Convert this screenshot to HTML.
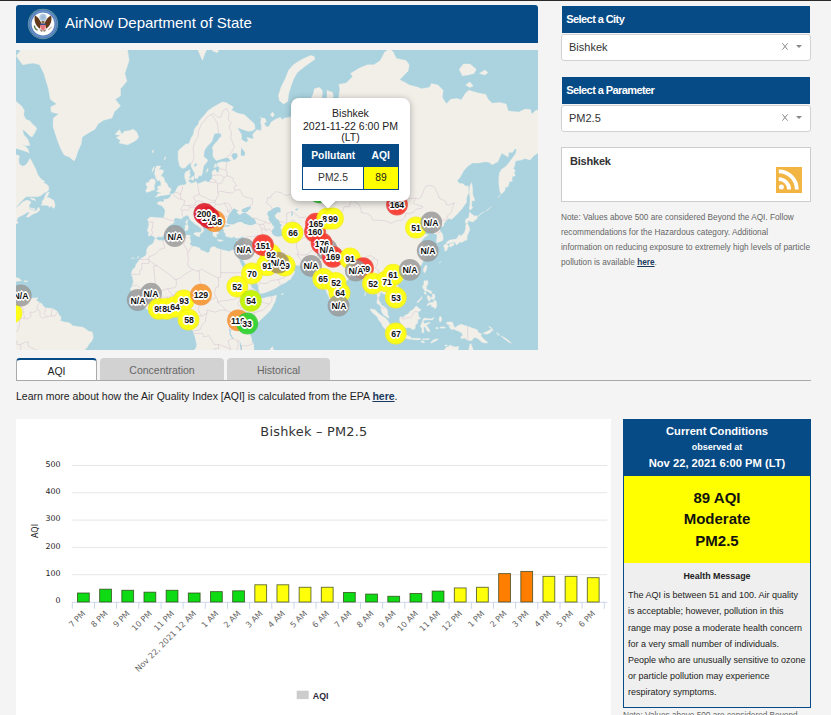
<!DOCTYPE html>
<html lang="en">
<head>
<meta charset="utf-8">
<title>AirNow Department of State</title>
<style>
*{box-sizing:border-box;margin:0;padding:0}
html,body{width:831px;height:715px;overflow:hidden;background:#f4f4f4;font-family:"Liberation Sans",Arial,sans-serif;color:#222}
body{position:relative}
.abs{position:absolute}
#topline{left:0;top:0;width:831px;height:1px;background:#2a2a2a}
#hdr{left:16px;top:5px;width:522px;height:38px;background:#064a86;border-radius:3px 3px 0 0;color:#fff}
#hdr .t{position:absolute;left:49px;top:8px;font-size:15px;line-height:19px;white-space:nowrap}
#map{left:16px;top:50px;width:522px;height:300px;background:#aad3df;overflow:hidden}
.ph{background:#064a86;color:#fff;font-weight:bold;font-size:11px;line-height:27px;padding-left:4.5px;height:27px;left:561.8px;width:248.3px;letter-spacing:-0.58px}
.sel{left:561px;width:250px;height:27px;background:#fff;border:1px solid #d2d2d2;border-radius:3px;font-size:11px;line-height:25px;padding-left:7px;color:#333}
.sel .x{position:absolute;left:219.8px;top:8.2px;width:6px;height:7px}
.sel .c{position:absolute;right:8.3px;top:10px;width:0;height:0;border-left:3.4px solid transparent;border-right:3.4px solid transparent;border-top:3.4px solid #888}
#city{left:561px;top:147px;width:250px;height:54.6px;background:#fff;border:1px solid #ccc}
#city b{position:absolute;left:8px;top:6.6px;font-size:11px;color:#333;letter-spacing:-0.2px}
#rss{position:absolute;left:214.2px;top:19.2px;width:26px;height:26px;background:#f2b442}
#note{left:561px;top:209.7px;width:265px;font-size:8.25px;line-height:15px;color:#666}
#note a,#learn a{color:#1a3a5f;font-weight:bold;text-decoration:underline}
.tab{top:358px;height:23px;background:#d2d2d2;border-radius:4px 4px 0 0;font-size:10.5px;line-height:25px;text-align:center;color:#666}
#tab1{left:16px;width:81px;background:#fff;border:1px solid #aaa;border-top:2px solid #064a86;border-bottom:none;color:#222;line-height:22px}
#tab2{left:100px;width:124px}
#tab3{left:227px;width:103px}
#tabline{left:16px;top:380px;width:795px;height:1px;background:#a9a9a9}
#learn{left:16px;top:389px;font-size:10.5px;line-height:14px;color:#222;white-space:nowrap}
#chart{left:16px;top:419px;width:595px;height:300px;background:#fff}
#cc{left:623px;top:419px;width:188px;height:288.9px;border:1px solid #064a86;background:#efefef}
#cc .h{background:#064a86;color:#fff;text-align:center;font-weight:bold;height:55.7px;font-size:11.2px;line-height:16px;padding-top:3.3px}
#cc .h small{font-size:9px;display:block;line-height:17.4px}
#cc .h span{display:block;line-height:13px}
#cc .y{background:#ffff00;height:87.2px;text-align:center;font-weight:bold;font-size:15px;line-height:21.25px;padding-top:11.4px;color:#111}
#cc .hm{font-weight:bold;font-size:8.9px;text-align:center;line-height:14px;margin-top:6px;color:#222}
#cc .tx{font-size:9px;line-height:16.14px;padding:4.4px 0 0 4px;color:#222;white-space:nowrap}
#note2{left:623px;top:710.4px;font-size:8.25px;line-height:12px;color:#666;white-space:nowrap}
#labels i{position:absolute;width:30px;text-align:center;font:bold 9.8px/13px "Liberation Sans",Arial,sans-serif;color:#111;font-style:normal;letter-spacing:-0.1px;transform:scaleX(.89);text-shadow:1px 0 0 #fff,-1px 0 0 #fff,0 1px 0 #fff,0 -1px 0 #fff,1px 1px 0 #fff,-1px -1px 0 #fff,1px -1px 0 #fff,-1px 1px 0 #fff,1.7px 0 0 #fff,-1.7px 0 0 #fff,0 1.6px 0 #fff,0 -1.6px 0 #fff,0 0 2px #fff,0 0 3px #fff}
#pop{position:absolute;left:275px;top:48px;width:119px;height:103px;background:#fff;border-radius:8px;box-shadow:0 1.5px 7px rgba(0,0,0,.3)}
#pop .tipc{position:absolute;left:24px;top:103px;width:26px;height:13px;overflow:hidden}
#pop .tip{position:absolute;left:7px;top:-7px;width:12px;height:12px;background:#fff;transform:rotate(45deg);box-shadow:0 1px 5px rgba(0,0,0,.3)}
#pop .pt span{display:block}
#pop .pt{position:absolute;left:0;top:10.2px;width:119px;text-align:center;font-size:10.5px;line-height:11.8px;color:#222}
#pop table{position:absolute;left:11px;top:46px;width:97px;border-collapse:collapse;border:1px solid #064a86;font-size:10.3px}
#pop th{background:#064a86;color:#fff;font-weight:bold;height:22px;padding:0;text-align:center}
#pop td{height:23px;text-align:center;padding:0;color:#333;background:#fff}
#pop td.v{background:#ffff00;border-left:1px solid #064a86;width:35px;color:#222}
</style>
</head>
<body>
<div id="topline" class="abs"></div>
<div id="hdr" class="abs"><svg class="abs" style="left:11px;top:3px" width="32" height="32" viewBox="-16 -16 32 32">
<circle r="15.2" fill="#6f9f9c"/><circle r="14.5" fill="#3f6fb3"/><circle r="13" fill="none" stroke="#6f93c9" stroke-width="1.4"/><circle r="11.7" fill="#9ab6cc"/><circle r="11.2" fill="#fcfcfd"/>
<circle cx="0" cy="-6.6" r="3.6" fill="#b4cbe0"/><circle cx="0" cy="-6.6" r="2.1" fill="#9dbcd9"/>
<path d="M-1.8,-1.2 C-3.2,-3.4 -4.6,-7.2 -8,-8.2 C-9,-5.2 -8.4,-1.4 -6.6,1.2 C-5.6,2.8 -4.4,4 -3.2,4.8 L-2.6,2.2 L-1.4,0.6 Z" fill="#63391a"/>
<path d="M1.8,-1.2 C3.2,-3.4 4.6,-7.2 8,-8.2 C9,-5.2 8.4,-1.4 6.6,1.2 C5.6,2.8 4.4,4 3.2,4.8 L2.6,2.2 L1.4,0.6 Z" fill="#63391a"/>
<path d="M-1.5,-3 L1.5,-3 L1.5,-0.4 L-1.5,-0.4Z" fill="#8a6a48"/>
<path d="M-2.7,-0.4 L2.7,-0.4 L2.7,1.1 L-2.7,1.1Z" fill="#2f4f8f"/>
<path d="M-2.7,1.1 L2.7,1.1 L2.6,4 C2.1,5.6 0.8,6.3 0,6.7 C-0.8,6.3 -2.1,5.6 -2.6,4Z" fill="#e7787e"/>
<path d="M-9.2,1.4 C-9.3,3.8 -8,5.8 -5.6,6.8 L-5,5.8 C-6.8,4.8 -7.9,3.2 -7.9,1.4Z" fill="#5c7b48"/>
<path d="M5,5.4 L8.6,2.4 L9,3 L5.6,6.2Z" fill="#b59c80"/>
<path d="M-3.6,5.6 L-1.6,8 L0,7 L1.6,8 L3.6,5.6 L2.2,5.4 L0,6.8 L-2.2,5.4Z" fill="#9a8a78"/>
</svg><div class="t">AirNow Department of State</div></div>
<div id="map" class="abs"><!--MAP-START--><svg class="abs" style="left:0;top:0" width="522" height="300" viewBox="0 0 522 300"><path d="M139.5,188.5 137.8,186.4 135.6,185.3 132.4,185.9 132.7,182.1 131.2,181.0 132.4,177.1 132.9,174.3 132.4,171.8 131.6,169.2 134.4,167.1 139.0,167.4 143.3,167.7 147.6,168.0 148.6,164.4 149.1,161.4 148.8,159.6 146.7,156.8 145.4,155.5 142.0,154.6 141.2,152.7 143.9,151.4 148.0,152.0 148.0,148.8 148.8,149.4 151.6,149.1 154.6,146.8 154.8,144.4 156.7,143.8 158.6,142.7 159.9,140.7 161.4,137.2 163.1,135.8 166.3,135.0 168.7,135.0 169.7,134.0 170.6,133.6 169.7,130.3 168.7,127.7 168.7,123.9 169.7,121.9 171.8,121.1 174.0,119.6 173.6,124.3 174.6,124.6 173.1,126.9 172.1,129.2 172.5,130.7 172.7,132.1 174.6,132.5 174.6,133.6 177.2,132.9 179.9,131.4 181.6,134.0 185.5,132.5 189.7,130.7 191.2,132.1 193.6,132.1 194.0,130.3 196.1,128.8 196.3,126.2 196.1,122.3 197.6,120.0 199.5,119.6 200.8,122.3 202.7,122.3 203.4,117.1 201.5,115.9 201.2,113.4 204.0,112.2 206.8,111.8 211.0,112.2 215.7,110.5 213.2,109.2 211.9,107.5 208.9,107.9 204.7,109.2 200.4,110.5 198.3,108.4 196.8,105.8 197.2,101.3 196.3,97.6 198.3,94.3 201.5,90.9 203.8,87.5 205.5,86.4 205.1,83.9 202.9,82.9 198.7,83.4 197.2,87.0 196.1,90.9 194.6,92.9 191.7,95.7 189.5,98.5 188.2,101.3 187.8,105.8 188.0,107.1 191.0,109.2 191.7,110.9 190.0,113.0 187.6,115.9 187.0,119.2 186.3,123.5 185.3,125.8 182.7,125.8 181.6,128.4 179.1,128.4 178.5,125.8 178.9,123.5 177.0,120.0 175.3,116.7 174.8,113.9 174.0,111.4 173.6,113.4 171.8,114.7 169.5,117.5 166.3,118.4 163.5,115.9 163.3,114.3 162.3,110.1 162.1,105.8 162.1,101.3 164.6,98.5 167.2,96.2 170.1,93.8 172.3,94.3 173.6,91.9 175.3,87.5 177.4,84.4 178.2,79.7 180.2,76.5 182.1,74.8 183.3,70.9 185.9,68.0 188.5,65.1 191.7,60.9 195.1,58.4 198.3,56.5 201.9,54.6 206.4,52.0 210.0,52.6 213.2,54.6 217.4,57.1 215.3,60.2 217.4,60.9 221.7,63.3 228.1,64.5 233.4,69.2 238.3,73.7 239.2,78.6 236.6,80.8 232.3,81.3 225.9,79.2 221.7,77.6 220.6,75.9 222.8,80.2 225.5,84.4 225.5,89.4 227.0,90.4 230.2,92.4 232.3,90.4 230.8,87.5 233.4,88.0 237.7,89.0 236.6,84.4 240.9,79.7 245.1,80.8 245.5,76.5 244.7,72.0 245.5,68.0 243.6,67.4 249.2,68.6 250.4,72.0 247.9,73.2 250.4,77.0 253.0,76.5 255.3,72.0 259.6,69.2 264.3,67.4 266.4,69.8 268.6,68.0 273.4,67.4 277.1,65.7 280.3,64.5 279.6,60.2 281.3,60.2 287.7,63.3 289.9,63.9 294.1,66.9 296.7,69.2 298.4,65.7 294.5,61.5 293.7,55.9 294.1,50.6 297.3,43.8 298.4,38.8 303.7,37.4 306.5,41.0 305.8,49.3 306.5,55.9 305.8,62.1 306.0,68.0 308.0,72.0 303.7,78.1 304.8,80.8 309.0,76.5 310.7,70.9 310.1,65.1 308.6,59.0 309.7,52.6 311.1,45.9 310.9,40.3 316.5,42.4 317.5,46.6 313.3,51.3 318.6,53.3 321.8,52.6 322.9,45.9 323.9,38.8 322.9,34.4 330.3,32.9 336.7,26.6 334.6,23.4 343.1,18.3 351.6,14.8 358.0,14.8 364.4,10.4 368.7,1.9 373.6,-1.1 377.2,1.9 380.4,8.5 390.0,10.4 393.2,14.8 392.1,20.9 383.6,29.8 390.0,32.9 393.2,35.1 402.7,37.4 404.9,38.8 413.4,37.4 415.5,33.6 421.9,35.1 427.2,40.3 426.2,47.3 430.4,53.9 434.7,49.3 441.1,48.6 445.3,50.0 449.6,43.1 452.8,40.3 462.4,43.1 469.8,44.5 472.0,49.3 476.2,53.3 483.7,52.6 490.1,53.9 492.2,60.9 496.5,61.5 502.9,62.1 509.2,59.0 514.6,59.6 515.6,64.5 513.5,66.3 519.9,60.2 526.3,60.2 532.7,65.1 536.9,65.7 536.9,87.0 531.6,89.0 529.5,88.5 531.6,91.9 533.7,99.0 528.4,99.0 523.1,102.2 517.8,105.8 514.1,110.1 509.2,108.4 505.0,110.1 501.8,110.5 499.4,110.9 498.6,115.9 497.3,118.8 499.2,120.0 498.2,123.1 499.2,125.8 496.5,126.6 495.8,129.9 496.7,130.7 493.3,132.1 492.2,136.5 489.4,137.5 488.6,141.0 485.8,143.4 485.2,144.4 483.7,140.7 482.8,133.6 482.8,128.1 483.7,122.3 485.8,119.2 490.1,116.3 493.3,112.2 496.5,107.9 499.7,103.5 500.7,99.0 498.6,99.0 496.5,102.6 492.8,102.2 492.2,107.1 485.8,103.1 481.5,112.2 480.5,112.2 476.2,114.7 473.0,112.2 468.8,111.8 462.4,113.0 456.4,113.0 451.7,116.3 447.5,121.1 444.3,126.9 441.1,130.7 443.6,133.6 446.4,133.6 449.6,136.1 452.4,136.1 452.2,140.0 452.8,142.4 450.7,147.5 450.5,152.4 447.5,156.5 445.8,159.0 442.1,163.2 440.0,165.3 435.8,169.2 432.6,168.6 430.0,170.9 427.9,173.5 427.7,175.5 424.0,177.7 423.0,179.1 424.7,181.3 426.8,185.1 427.2,188.5 426.6,190.6 423.4,191.9 420.6,192.7 420.6,189.8 421.1,186.4 420.8,184.3 418.3,183.7 417.6,181.8 418.3,179.1 416.4,177.7 412.3,179.1 409.8,181.0 411.3,176.3 409.6,175.2 405.9,178.2 402.7,179.9 402.1,181.5 404.7,184.3 405.9,185.3 408.7,183.7 412.5,185.1 409.1,186.9 407.6,188.5 405.5,191.1 407.6,193.7 408.9,196.8 410.8,199.3 411.0,201.5 408.7,203.0 411.3,204.3 410.4,207.4 408.5,209.1 406.6,212.2 405.3,215.1 403.2,216.9 400.6,219.3 397.4,221.1 394.6,222.1 392.1,222.7 389.3,223.9 386.8,224.6 386.1,226.6 385.3,224.1 382.5,223.4 379.3,225.0 378.7,226.6 376.8,228.9 377.2,231.1 379.3,234.0 381.9,236.0 383.6,239.6 384.2,242.9 384.0,245.5 381.4,247.7 379.3,248.5 378.2,250.0 375.5,252.2 374.6,249.8 374.0,248.5 371.9,248.1 370.8,246.6 369.3,244.6 366.5,243.5 366.3,242.0 364.4,242.2 364.2,245.1 362.9,247.7 362.9,250.7 364.4,252.6 365.5,255.4 367.6,256.3 369.3,257.6 371.4,260.1 371.6,262.3 371.9,264.8 373.3,267.8 371.9,268.0 369.7,266.3 367.4,264.8 365.9,262.3 365.0,259.1 365.0,256.9 363.3,254.8 361.2,253.7 360.8,251.6 361.6,248.3 361.2,245.1 360.6,241.8 359.7,238.5 359.3,235.2 357.6,234.0 356.3,235.2 354.4,236.7 352.3,236.3 352.7,232.9 352.0,230.0 350.6,227.8 349.1,226.2 347.4,223.9 346.9,222.1 344.4,221.6 342.0,223.2 339.3,223.4 336.7,223.9 336.3,226.2 334.6,227.5 332.4,228.9 330.3,231.1 328.8,232.5 326.7,234.7 324.4,236.3 322.4,237.4 322.0,240.7 322.4,242.7 321.6,245.5 321.4,248.7 319.7,250.9 318.0,252.0 316.5,253.5 314.3,251.6 313.7,249.4 312.6,246.1 310.9,243.1 309.7,239.6 308.6,237.4 307.5,234.0 306.5,229.6 306.3,226.2 306.0,223.9 305.2,225.0 302.6,225.7 299.4,223.4 298.4,222.1 300.9,220.7 298.4,220.4 296.7,218.8 295.0,218.1 293.9,216.0 293.0,214.8 288.8,215.3 283.5,215.5 279.2,215.1 274.9,214.4 273.2,211.5 271.5,210.8 268.1,212.0 264.3,211.0 261.1,208.9 259.6,206.2 257.9,203.3 255.6,202.8 253.6,203.8 254.1,205.5 254.9,207.9 256.8,210.3 258.3,212.2 259.0,214.6 260.0,216.7 260.5,213.2 261.3,215.8 261.3,217.6 263.4,217.6 267.3,217.2 269.2,215.1 270.9,213.2 271.5,212.7 271.5,216.0 272.8,218.1 276.2,219.0 278.8,221.6 277.7,224.1 276.0,226.4 274.5,229.6 272.8,230.0 269.6,232.7 266.4,234.0 262.6,236.3 259.0,238.5 255.8,240.0 251.5,241.8 247.2,243.3 244.1,243.5 243.4,241.8 242.6,238.7 242.4,236.3 241.3,233.4 239.2,230.7 237.2,227.3 234.9,224.1 233.4,220.4 230.8,216.9 229.1,213.4 226.6,209.1 225.5,208.6 225.9,205.0 224.5,208.6 224.2,209.4 222.8,207.4 220.8,204.0 220.2,200.8 223.4,201.0 224.7,200.0 225.5,198.3 225.9,196.3 227.2,193.7 227.9,190.6 228.1,188.0 228.5,186.4 225.9,186.7 223.8,187.7 220.6,188.2 217.4,186.4 216.4,187.7 213.2,187.2 211.0,186.4 209.5,185.9 209.5,183.2 207.6,182.1 208.5,179.9 207.0,179.1 207.2,177.7 210.0,176.6 213.2,176.3 213.2,174.9 212.1,174.9 210.0,175.2 207.8,176.3 206.8,175.5 204.7,175.2 202.5,175.7 203.2,177.1 201.5,177.7 200.0,176.3 199.5,178.2 200.4,179.9 200.8,181.5 202.5,182.6 202.5,184.0 200.8,183.4 200.4,184.8 200.8,187.2 199.3,187.2 198.7,186.1 197.6,186.4 196.8,184.3 197.2,182.6 196.1,181.8 195.5,180.5 194.4,178.8 193.1,176.3 192.7,173.5 192.5,172.0 190.8,170.6 188.7,169.2 186.1,167.4 183.8,165.3 182.5,162.6 180.8,163.5 180.4,161.4 177.8,162.0 177.6,164.7 180.2,167.4 181.6,170.6 183.8,172.3 185.5,172.3 185.5,173.8 187.6,174.9 189.7,176.0 190.8,177.4 190.0,178.0 187.6,176.3 186.8,178.2 188.0,180.5 186.5,182.1 185.5,183.4 184.8,183.2 185.1,181.5 185.9,180.5 185.1,177.7 183.3,177.1 182.3,176.0 181.6,175.5 179.1,174.3 177.4,172.6 175.3,170.9 173.8,169.2 173.1,166.8 170.6,165.0 168.4,166.5 167.2,167.1 165.2,168.9 162.5,168.3 159.9,167.7 158.0,168.9 158.0,170.9 158.2,172.3 156.1,174.0 153.3,175.2 151.4,178.2 150.8,179.4 151.8,181.0 150.3,182.4 149.7,184.3 147.6,185.3 146.7,186.7 142.0,186.7 140.1,188.0ZM138.8,189.0 140.1,188.8 142.9,190.6 145.2,190.3 147.1,190.9 149.3,189.3 151.4,188.8 154.2,187.2 157.8,186.4 162.1,186.4 166.3,185.9 170.6,185.3 172.5,185.1 174.8,185.9 173.8,187.5 174.4,189.8 174.8,192.4 173.1,193.7 174.8,195.0 177.0,196.5 179.5,196.5 183.8,198.0 184.4,200.0 188.7,201.5 191.9,203.0 194.0,201.3 194.0,198.8 196.1,196.8 199.3,196.8 200.8,198.3 204.7,199.5 208.9,200.5 213.2,201.5 215.3,200.5 217.4,199.8 220.2,200.8 221.7,201.0 220.8,204.0 221.1,206.2 223.0,209.1 223.8,211.5 225.7,215.8 227.2,218.3 227.4,220.4 230.0,222.7 230.6,225.0 230.8,228.2 231.7,230.7 233.6,231.8 235.3,236.3 235.5,237.4 237.7,238.9 239.8,241.1 242.4,242.9 243.6,244.4 243.4,245.9 245.1,248.3 247.2,248.3 251.5,247.0 255.8,246.6 260.5,245.3 260.0,248.3 259.0,251.6 256.8,255.9 254.7,260.1 251.5,263.3 248.1,266.5 244.1,270.2 240.9,272.9 238.7,275.1 237.0,277.2 236.0,279.3 234.5,282.5 234.0,284.7 235.5,287.9 236.0,292.2 237.5,293.3 237.9,297.6 237.7,302.0 238.1,305.3 234.5,309.8 177.0,309.8 176.5,305.3 177.6,300.9 180.2,297.6 180.8,294.4 179.7,290.0 178.7,285.7 177.6,283.6 177.4,281.5 176.5,280.4 174.8,278.7 172.1,276.1 170.6,272.9 171.2,270.2 172.1,267.6 172.3,264.4 171.6,262.5 170.4,261.2 169.1,261.2 166.3,261.4 164.2,261.6 162.9,259.7 161.0,257.4 158.6,257.1 155.7,257.4 153.5,258.0 151.4,258.6 149.3,259.7 147.1,260.6 145.0,259.9 142.9,259.5 138.6,260.4 135.4,261.4 132.2,260.1 128.4,257.4 126.9,256.1 124.8,254.8 123.3,252.6 122.2,250.5 120.3,248.3 119.5,247.2 117.3,245.5 115.8,244.2 115.6,242.0 115.2,240.2 114.1,239.1 115.6,237.4 116.3,235.2 117.3,231.8 116.7,228.4 116.3,226.2 115.2,225.0 115.4,222.7 116.9,219.3 119.5,216.9 119.9,214.6 122.6,211.0 123.9,208.9 126.9,207.4 129.7,205.5 130.7,202.8 130.5,200.0 131.8,197.5 133.3,195.5 135.2,194.7 136.9,193.7 138.0,191.1ZM256.4,296.5 258.5,303.1 258.5,309.8 245.1,309.8 246.2,305.8 249.4,304.7 252.6,302.0 254.1,299.4ZM139.3,147.1 142.5,146.5 143.9,145.8 147.1,145.5 149.3,145.1 152.0,144.8 154.4,143.4 153.3,142.4 154.8,140.7 155.0,138.6 152.5,137.2 151.8,135.4 151.0,133.6 148.8,131.4 148.0,128.1 146.1,126.2 144.6,126.2 145.9,124.3 147.1,122.3 147.6,120.3 143.9,119.6 142.5,120.3 144.8,115.9 140.8,115.9 139.0,119.2 139.0,122.3 138.2,123.5 139.7,126.2 139.5,128.8 141.2,128.1 140.8,130.7 143.9,130.3 145.0,133.6 144.8,136.1 141.8,136.1 141.6,137.9 142.7,139.6 140.3,141.0 142.2,142.1 145.0,142.7 143.9,143.4 141.8,143.8 140.8,145.8ZM138.6,140.0 138.2,136.1 139.5,131.8 138.2,129.2 135.9,128.8 133.7,129.9 133.3,132.1 130.1,132.9 130.3,135.8 131.6,136.8 130.5,139.3 129.5,141.0 131.0,142.4 133.7,141.4 136.5,140.3ZM103.0,92.9 108.8,94.3 111.6,94.8 117.3,91.9 120.5,89.9 122.6,87.0 120.5,81.8 117.3,79.2 113.1,80.8 108.2,81.3 106.0,84.4 103.5,79.7 100.3,82.9 99.2,84.4 104.5,85.4 100.3,87.5 104.5,90.4ZM57.9,110.9 53.4,107.1 48.1,104.9 44.9,99.0 41.7,90.9 39.6,84.4 37.0,76.5 37.4,68.0 42.8,63.9 35.3,62.1 34.7,57.1 40.6,53.9 34.3,49.3 32.5,38.8 27.9,23.4 23.6,14.8 17.2,13.1 6.6,14.8 0.2,5.7 4.4,0.9 -4.1,-6.2 6.6,-20.5 13.0,-32.8 23.6,-53.9 55.6,-70.2 87.5,-81.2 108.8,-53.9 125.8,-46.4 115.2,-26.5 110.9,-4.1 113.1,10.4 108.8,23.4 110.9,31.3 104.5,38.8 104.5,45.9 99.2,49.3 104.5,55.9 98.2,62.1 96.0,68.0 87.5,70.3 82.2,73.7 79.0,79.2 71.5,83.4 66.2,87.0 65.1,94.3 61.9,101.3 59.8,107.9ZM181.2,-9.4 182.3,0.9 186.5,10.4 188.7,3.8 191.4,-2.1 196.1,-9.4 189.7,-26.5 177.0,-26.5ZM196.6,0.9 201.5,2.8 203.6,-3.1 200.4,-7.2 196.1,-5.2ZM262.5,45.5 265.1,37.1 269.3,28.7 272.6,20.3 277.7,14.4 286.1,9.3 294.5,5.4 298.2,6.5 298.8,9.3 292.9,13.5 287.0,17.7 281.1,22.8 277.7,28.7 275.2,35.4 272.6,43.9 271.8,51.4 267.6,54.0 263.4,50.6ZM254.3,65.1 256.8,66.9 258.5,64.5 256.4,62.1ZM276.0,59.0 279.8,60.9 280.3,57.8 277.1,55.9ZM443.2,19.2 446.4,25.8 451.7,25.0 458.1,23.4 460.2,19.2 453.9,14.0 447.5,14.0ZM449.6,35.1 453.9,37.4 457.1,35.9 453.9,32.1ZM463.4,23.4 468.8,25.0 472.0,22.5 468.8,20.0ZM364.4,-4.1 370.8,-3.1 376.1,-9.4 370.8,-18.2 364.4,-14.8ZM453.9,160.2 456.8,157.7 455.4,155.5 456.0,150.7 459.0,150.7 456.6,144.1 456.6,138.9 455.6,132.5 454.3,135.4 453.4,138.9 453.6,144.1 454.1,149.1 453.9,154.0 453.4,158.3ZM449.6,173.5 452.2,172.6 451.7,170.6 456.6,172.0 461.3,168.6 460.7,165.6 458.8,166.2 455.6,164.1 453.4,162.0 453.2,165.3 452.4,168.3 450.5,168.6 449.2,170.6ZM451.5,173.5 452.8,176.3 453.9,179.1 452.8,182.4 451.7,184.5 450.9,187.7 451.3,189.3 449.2,191.1 449.0,189.8 447.0,191.9 445.8,192.2 443.2,192.2 442.8,192.9 441.7,194.2 440.7,195.0 439.2,193.2 439.4,192.2 436.8,192.2 433.6,193.2 430.4,194.0 430.4,192.4 433.6,190.1 435.8,189.8 439.0,189.3 441.1,188.5 442.8,185.1 443.8,184.5 443.6,186.4 446.4,184.8 448.3,182.6 449.4,179.9 449.6,177.7 449.4,176.0 450.2,174.3ZM433.6,196.3 434.7,197.0 437.2,195.5 438.3,194.2 437.2,192.9 434.7,193.7 433.2,195.0ZM428.7,200.8 429.8,201.3 430.6,200.3 431.5,198.8 432.6,196.3 431.5,194.7 430.0,194.0 427.9,195.0 427.7,196.8 428.7,198.3ZM408.7,223.0 410.2,220.4 411.0,216.2 410.2,215.1 409.1,215.8 407.4,219.3 407.6,221.6ZM382.9,229.6 384.6,231.4 386.8,230.0 387.8,228.0 386.8,227.1 384.6,227.5ZM321.4,253.7 321.8,249.8 323.5,251.6 324.6,252.6 325.6,254.8 325.4,256.9 323.9,257.8 322.2,258.0 321.4,255.9ZM408.3,230.7 411.7,230.7 412.1,234.0 410.4,236.3 410.4,238.9 412.3,240.2 415.3,241.1 415.7,243.7 414.0,242.9 412.3,241.8 410.8,240.9 408.7,241.1 408.3,239.6 407.0,238.5 406.6,235.6 407.9,234.9 407.9,232.9ZM411.0,255.9 411.7,253.7 414.5,252.6 417.2,252.2 418.7,249.8 420.4,251.6 420.8,254.8 420.2,257.4 418.7,258.9 418.1,256.9 415.5,256.9 415.5,254.8 413.4,254.8ZM416.2,244.0 418.3,244.0 419.1,246.8 418.1,249.0 417.2,249.4 416.4,247.7 416.6,246.1ZM411.3,248.3 411.3,245.5 413.4,245.9 414.5,247.7 414.0,251.1 412.5,250.9 412.1,249.4ZM407.9,242.0 409.8,242.0 410.2,244.2 409.1,244.6ZM401.0,252.8 402.7,252.0 405.9,248.3 406.1,246.4 404.9,248.1 401.7,251.1ZM383.6,267.6 384.8,266.5 387.8,267.6 388.7,265.5 392.1,264.0 394.2,261.2 396.4,260.1 398.5,258.0 400.0,255.9 401.7,256.9 402.7,258.4 405.3,259.5 403.2,261.2 402.1,262.3 402.3,264.4 402.7,266.5 404.9,268.7 402.3,269.1 401.7,270.8 401.7,272.9 399.5,275.1 399.1,278.3 398.5,279.3 395.5,279.3 395.3,278.0 392.1,277.6 390.0,278.0 387.8,277.2 386.1,276.8 385.7,274.0 384.0,271.9 383.6,269.7ZM354.4,258.9 359.1,259.7 360.8,261.8 364.0,264.4 366.1,266.1 368.7,267.6 371.2,269.7 372.5,271.9 374.0,274.0 375.0,275.7 377.2,277.2 377.0,280.4 376.8,283.2 374.2,283.2 372.5,281.5 369.3,279.3 366.5,276.1 365.3,272.9 362.7,270.2 361.6,267.2 359.1,264.8 356.5,262.7 354.4,260.1ZM375.5,285.3 377.2,283.4 379.3,283.5 382.5,284.7 386.8,285.5 387.8,284.5 391.5,285.5 395.1,287.3 395.3,289.4 390.0,288.5 385.7,287.9 381.4,287.5 378.0,286.6ZM395.5,288.3 397.6,288.1 399.8,288.5 401.7,288.3 404.4,288.5 404.9,289.4 400.6,290.0 396.4,289.6ZM406.6,288.8 410.2,288.8 413.4,288.5 413.0,289.4 408.1,289.8 406.6,289.6ZM404.9,291.1 407.0,290.7 408.7,292.2 406.6,292.9ZM414.5,292.9 416.6,290.5 418.7,289.2 422.5,288.8 420.8,290.5 417.6,292.0 415.5,292.9ZM405.9,282.5 405.9,278.3 404.4,276.6 405.5,273.4 406.6,270.8 407.0,269.3 408.7,268.0 412.3,268.7 415.5,268.7 418.1,267.4 416.6,269.9 413.4,269.9 409.1,269.9 407.4,270.8 407.4,272.7 409.1,273.8 411.3,272.7 414.0,272.5 414.2,272.9 411.3,274.4 410.2,275.1 411.9,277.2 412.3,278.3 413.4,279.3 413.8,282.1 411.3,281.0 410.2,279.3 409.1,276.6 407.6,277.2 407.9,280.4 407.9,282.7ZM423.0,268.7 424.0,266.1 425.5,267.6 425.7,270.2 424.0,272.5 423.4,270.8ZM424.0,277.2 427.2,276.8 430.0,277.8 427.2,278.3 424.0,278.0ZM419.8,277.6 421.9,277.4 422.3,278.5 420.2,278.9ZM430.4,272.5 433.6,271.7 436.8,272.5 437.2,275.1 439.0,277.8 442.1,275.5 445.3,274.2 448.5,275.5 451.7,276.3 456.0,278.0 459.2,278.9 462.0,280.4 462.0,282.3 464.5,283.6 466.2,284.2 464.5,285.3 466.6,287.9 468.8,290.0 472.0,292.6 469.8,293.1 466.6,292.4 464.5,291.1 462.4,289.0 459.2,287.3 457.1,288.5 456.0,290.5 453.9,290.5 451.7,290.3 448.5,288.1 445.3,288.8 444.9,286.4 447.0,285.3 445.3,282.5 441.1,280.6 437.9,279.3 434.7,279.3 434.3,277.8 432.6,276.8 435.8,275.9 433.6,275.5 430.4,273.6ZM467.3,283.0 470.9,281.5 474.1,279.8 475.8,280.0 474.7,282.5 470.9,284.2 467.7,283.6ZM472.6,276.3 475.2,277.6 477.3,280.4 476.7,280.8 474.1,277.8ZM480.7,282.5 483.3,284.7 482.6,285.5 480.9,283.6ZM484.7,285.7 489.0,287.9 493.3,291.1 495.4,293.3 492.2,291.8 487.9,288.5ZM452.8,309.8 452.6,305.3 453.0,298.7 453.9,294.4 454.9,293.7 456.0,296.5 457.7,301.6 459.2,301.6 460.9,303.1 461.3,306.4 462.4,309.8ZM415.5,309.8 416.6,306.0 417.6,303.1 419.8,300.9 421.9,300.9 424.0,302.7 426.2,303.1 427.7,302.7 428.3,299.8 430.0,297.4 432.6,296.5 433.8,295.0 435.8,296.1 439.0,297.0 442.8,296.5 442.1,299.8 440.7,302.0 440.0,303.1 443.2,305.3 447.5,307.6 449.6,309.8ZM428.7,295.2 431.1,295.0 431.3,295.9 429.4,296.1ZM-4.1,309.8 -4.1,245.5 -0.9,244.4 0.2,245.5 -1.3,247.7 -0.5,249.4 0.2,247.2 2.3,246.1 2.3,244.8 4.4,246.1 6.1,248.1 10.8,248.1 14.0,249.0 17.2,247.9 19.3,248.1 19.8,249.8 21.9,251.6 23.6,252.6 25.7,253.7 27.4,256.3 30.0,258.0 33.8,258.2 36.4,258.6 40.0,260.4 41.7,261.8 42.8,264.4 44.9,267.0 44.9,269.7 43.8,270.8 46.0,271.2 48.1,271.9 49.2,272.3 51.3,272.3 54.5,273.6 56.6,275.7 58.7,275.9 61.9,276.8 66.2,277.0 69.4,278.7 72.2,281.0 76.2,281.9 77.1,285.7 77.1,288.1 75.8,291.1 73.7,293.3 72.2,295.5 70.5,298.3 69.4,298.7 68.3,302.0 68.3,309.8ZM19.6,249.4 21.5,249.2 21.7,247.7 19.6,247.9ZM-4.1,227.5 -0.9,227.5 2.3,228.0 5.7,230.5 3.4,230.9 0.2,231.4 -0.9,232.5 -4.1,231.4ZM8.3,230.7 11.7,230.9 11.2,231.8 8.3,231.8ZM-4.1,174.9 -2.0,174.3 2.3,172.9 0.8,170.6 1.9,167.4 4.4,166.2 8.7,164.1 10.8,162.6 14.0,161.7 10.4,167.1 13.0,167.1 16.1,164.4 21.5,162.3 23.6,160.2 24.0,159.6 22.5,157.1 20.4,160.8 17.2,160.8 14.0,159.6 13.4,157.1 13.0,154.6 14.4,154.0 14.7,151.4 10.8,150.1 6.6,152.0 2.3,156.2 -0.3,157.7 3.4,153.3 6.6,150.1 9.8,146.8 15.1,146.5 20.4,146.8 24.7,145.8 27.9,143.1 31.1,141.4 32.8,140.0 32.5,136.1 29.6,133.6 26.8,132.9 28.9,131.4 24.7,128.8 21.5,124.3 19.8,119.2 17.6,115.1 15.1,110.1 13.8,108.4 11.9,112.2 9.8,115.1 6.6,116.3 3.4,114.3 2.7,110.1 3.4,105.8 -0.9,104.4 -4.1,102.2ZM25.1,155.2 26.8,152.4 25.7,152.0 27.9,149.1 29.4,145.1 30.4,143.1 33.2,142.1 32.1,145.1 30.6,147.5 33.2,147.8 35.3,149.1 37.4,150.1 38.5,152.4 39.1,155.5 38.1,158.3 36.4,157.7 36.0,155.8 33.2,157.4 32.5,155.5 28.9,155.2ZM14.0,147.8 18.3,148.8 20.0,150.4 16.1,149.8ZM14.4,157.7 19.3,159.0 18.3,160.2 15.5,159.3ZM-4.1,97.6 2.3,99.0 10.8,101.7 13.2,103.1 11.9,99.0 9.8,96.7 5.5,93.4 9.8,95.7 14.0,95.3 11.9,89.4 7.6,84.4 6.6,79.2 9.8,81.8 14.0,85.9 16.1,87.0 19.3,81.8 20.8,78.6 19.3,76.5 16.1,73.7 14.0,70.9 9.8,69.2 7.6,65.1 8.3,60.2 5.5,55.9 1.2,52.6 -2.0,49.3 -4.1,48.0ZM-4.1,27.4 -4.1,10.4 -19.0,10.4 -19.0,27.4ZM-4.1,-9.4 -4.1,-70.2 -19.0,-70.2 -19.0,9.4 -14.7,6.7 -8.3,-4.1ZM177.8,183.2 179.7,182.6 184.6,182.4 183.6,185.9 183.6,186.7 181.9,186.4 178.0,184.3ZM168.9,180.5 169.3,175.2 171.0,174.3 172.3,176.3 171.8,179.9 170.6,180.5 169.5,180.7ZM169.7,172.0 171.4,169.2 171.6,172.0 171.0,173.8 169.9,173.2ZM201.5,189.6 203.6,189.8 207.4,190.3 204.2,191.4 201.7,190.6ZM220.2,191.1 221.7,190.3 225.1,189.3 223.8,191.1 221.7,192.2ZM156.5,178.8 158.2,178.0 158.6,179.1 157.6,179.6ZM175.3,127.3 178.0,126.2 178.0,128.8 176.5,130.7 175.0,128.8ZM172.3,128.1 174.2,128.1 174.4,129.6 172.7,129.9ZM190.2,122.3 191.4,118.8 192.3,118.8 191.4,121.5ZM198.0,117.5 200.8,116.7 200.4,115.5 198.3,115.9ZM198.5,115.1 200.4,115.1 200.0,113.9 198.9,114.3ZM265.1,244.0 267.5,243.5 267.3,244.2 265.4,244.4ZM136.5,119.2 138.2,116.3 138.0,118.8 136.1,122.3ZM148.0,110.1 149.3,106.6 149.5,108.8ZM135.9,101.3 137.6,99.9 137.1,103.1ZM115.4,208.6 117.1,207.4 116.5,208.4ZM117.7,208.4 118.6,208.4 118.4,209.1ZM121.2,208.4 122.0,206.9 122.6,205.7 122.0,208.2ZM420.2,195.5 421.7,195.0 421.1,195.8ZM423.4,213.2 424.7,211.5 423.8,212.2ZM461.3,166.8 463.4,165.0 468.3,161.7 465.6,163.2 462.4,166.2ZM469.8,161.1 472.0,159.6 475.6,156.5 470.9,160.2ZM482.0,147.5 484.1,144.8 482.8,146.8ZM348.6,246.1 349.5,241.8 349.3,245.5ZM375.5,274.2 377.6,274.4 378.7,277.2 376.8,276.3ZM380.6,276.3 382.1,276.8 381.4,277.6ZM415.5,249.4 416.6,249.4 416.2,246.8 415.3,247.2Z" fill="#f2efe9" stroke="#f2efe9" stroke-width="0.4" stroke-linejoin="round"/><path d="M211.0,173.5 211.0,169.2 212.3,166.8 212.5,164.7 214.7,162.6 216.4,159.6 218.5,158.3 220.6,159.9 222.8,159.9 220.6,162.0 222.8,164.4 223.8,165.0 226.4,163.2 229.1,162.3 230.2,163.2 231.3,164.1 234.5,166.2 236.0,167.7 238.7,169.2 240.0,172.0 239.8,173.5 236.6,174.9 233.4,175.2 230.2,174.3 228.1,173.8 225.9,172.0 222.8,172.0 219.6,173.2 217.4,174.6 214.2,174.3 213.2,174.3ZM225.9,161.7 225.9,159.3 229.1,158.0 231.3,157.1 234.9,156.5 234.5,158.7 232.3,160.2 231.3,162.0 229.4,162.0 227.0,162.3ZM208.9,176.3 210.0,174.9 213.2,174.9 214.2,175.7 212.1,176.6ZM252.6,169.5 252.6,166.2 251.1,164.4 251.9,161.7 254.7,160.2 257.9,158.0 261.1,157.1 264.3,157.7 264.7,162.3 261.1,162.6 260.0,164.7 258.5,165.0 260.0,168.6 263.2,170.6 263.9,173.5 266.0,174.9 264.3,177.7 265.4,179.6 266.2,184.5 266.4,186.1 262.2,186.7 259.0,185.9 256.8,184.5 255.6,182.1 256.4,179.6 258.5,176.9 256.8,175.7 255.8,173.5 254.3,172.0ZM279.2,159.3 282.4,158.0 281.3,160.2 279.8,160.5ZM275.4,161.7 276.6,161.4 276.9,164.7 275.8,166.8 275.4,164.7ZM372.3,142.1 374.0,142.7 377.2,140.0 381.4,136.1 384.6,130.7 385.5,126.9 384.0,127.3 382.1,132.9 378.9,136.5 375.0,140.0ZM308.0,162.6 309.0,159.6 312.2,158.0 316.5,158.3 319.7,158.7 318.6,159.6 314.3,159.6 311.1,160.8 309.7,163.2ZM217.0,110.1 219.6,109.2 221.7,106.6 221.1,103.5 217.4,103.1 215.3,105.8 217.0,108.4ZM224.9,105.8 228.7,105.8 229.1,102.2 227.0,99.9 225.5,97.6 224.9,101.3ZM218.9,272.9 219.6,270.4 222.8,269.9 224.9,271.2 223.8,274.0 222.8,276.1 219.6,276.3ZM213.6,278.0 214.7,280.4 214.7,283.6 217.0,287.9 217.6,289.4 216.4,288.8 213.8,284.7 213.4,280.4ZM223.8,291.3 225.1,294.4 225.7,297.6 226.4,301.6 225.3,300.9 224.2,297.6 223.8,294.4ZM177.8,116.3 179.7,113.0 181.2,114.7 179.1,116.7ZM-1.7,251.1 -0.3,251.1 0.2,248.7 -1.1,247.7 -2.2,249.4Z" fill="#aad3df"/><path d="M175.0,114.3 177.4,110.1 178.0,105.8 177.4,102.6 177.2,96.7 179.1,91.9 181.9,87.0 182.5,81.3 185.5,73.7 188.7,70.9 190.2,68.0 194.0,65.1 195.3,64.8M202.9,82.9 201.9,77.6 201.5,73.7 198.3,68.0 195.3,64.8M195.3,64.8 197.2,63.3 201.5,66.9 204.7,67.4 206.8,60.9 210.8,58.4 213.2,63.9 213.0,64.8M213.0,64.8 212.1,69.8 215.3,72.6 213.2,77.0 215.5,83.4 214.7,88.0 216.4,91.9 218.5,97.1 214.2,104.4 210.6,107.9M211.0,112.2 210.0,118.4 210.4,120.7 211.5,125.8 208.1,127.3 206.8,130.3 205.7,132.9 201.5,134.0 201.7,142.4 202.5,144.8 199.5,150.4M203.2,118.8 206.8,119.2 209.8,120.3M196.2,125.8 200.4,125.0 204.7,125.0 208.1,127.3M196.8,129.2 199.8,130.3 200.0,132.1 201.5,134.0M193.6,132.1 200.0,132.3M181.6,134.0 182.1,137.2 182.7,140.7 183.3,144.1 182.9,144.4M182.9,144.4 179.1,146.1 177.4,146.8 178.0,149.1 180.8,151.4M182.9,144.4 186.5,146.5 189.7,147.5 191.7,149.1 194.0,150.1 199.5,150.4M168.9,150.7 167.6,155.2M156.7,143.8 160.3,147.5 163.8,149.1 165.0,149.1 168.9,150.7M166.7,136.1 166.3,140.0 164.2,144.1 164.4,145.1M158.6,142.7 161.0,142.7 163.8,143.4 164.4,145.1 165.0,149.1M167.6,155.2 164.4,159.6 166.3,160.5 166.1,162.9 166.3,165.6 167.4,166.8M167.6,155.2 171.8,155.5 173.8,157.4M166.3,160.5 169.5,159.6 170.6,160.8 172.9,159.6 173.8,157.4M171.8,155.5 177.0,155.2 179.1,155.2 179.1,153.0 180.8,151.4M173.8,157.4 177.4,157.1 180.6,158.7M180.8,151.4 183.3,150.7 187.4,152.0 187.4,154.0 185.7,157.4M180.6,158.7 185.7,157.4M180.6,158.7 180.4,161.4M132.4,172.3 133.9,172.0 137.3,172.3 136.7,174.9 136.5,178.5 135.4,178.8 136.5,182.6 135.6,185.3M147.6,168.0 152.9,169.7 158.2,170.9M187.4,154.0 191.4,154.6 195.1,152.4 198.7,152.7M198.7,152.7 200.2,154.0 196.6,159.0 194.6,159.9M194.6,159.9 191.4,160.5 186.3,158.7 185.7,157.4M180.4,161.7 184.0,161.7 186.3,158.7M191.4,160.5 191.9,163.5 185.5,162.6 185.1,163.8 188.7,169.2M191.9,163.5 192.9,166.2 192.3,168.3 190.8,170.6M194.6,159.9 197.0,162.6 199.8,165.6M199.8,165.6 199.1,169.2 200.2,172.0 200.4,174.0M192.7,172.3 195.1,171.5 197.2,171.2 200.2,172.0M195.1,171.5 195.1,174.9 194.4,178.5M195.1,174.9 200.2,174.0 200.4,174.0M200.2,154.0 204.4,154.9 208.1,153.0 211.5,158.3 211.5,161.7 214.7,162.6M208.1,153.0 211.0,153.0 213.6,154.3 215.5,159.0 211.5,161.7M199.8,165.6 204.7,167.1 208.9,165.9 212.3,167.1M200.4,174.0 203.6,173.8 207.4,172.9 208.1,174.0 206.8,175.5M207.4,172.9 211.0,172.0M201.7,142.4 204.7,141.0 210.0,142.4 216.4,143.1 219.1,140.3M219.1,140.3 218.1,136.8 221.1,135.4 217.0,130.7 217.4,128.1 211.5,125.8M219.1,140.3 223.8,139.6 227.2,146.1 232.3,147.8 236.8,148.8 236.2,154.0 232.8,156.8M199.5,150.4 198.7,152.7M256.2,159.3 254.7,155.8 251.5,154.0 250.4,152.7 251.5,150.1 251.3,147.8 254.7,147.8 255.1,145.5 259.6,141.7 265.4,142.7 267.5,144.1 270.0,145.5 276.2,144.1 279.2,144.8 282.4,144.8 281.3,140.7 279.6,134.0 282.0,133.6 289.9,132.1 296.7,129.9 302.2,128.8 303.1,132.9 308.0,133.6 315.0,132.1 317.3,136.1 321.8,144.8 329.0,144.1 333.1,148.8 337.3,150.1M337.3,150.1 342.5,148.1 348.4,144.8 353.8,147.5 358.6,148.1 360.8,140.7 369.1,143.1 369.3,145.5 375.0,146.1 379.3,147.5 382.5,149.8 387.2,150.1 392.1,148.8 400.0,148.1M400.0,148.1 402.3,149.1 404.9,147.5 407.0,142.4 408.5,138.6 410.2,136.1 414.5,135.4 418.7,137.2 423.0,146.8 423.0,148.1 429.6,151.1 430.4,154.9 433.6,154.9 438.3,152.7 436.8,157.1 434.9,162.9 431.1,166.2 430.9,169.2 429.6,170.9M338.4,150.1 338.8,152.0 343.1,154.3 345.2,160.2 345.2,162.6 350.6,163.5 354.6,165.3 356.7,170.0 364.4,170.3 368.2,170.6 375.0,173.2 380.4,170.9 385.7,170.3 389.5,167.1 389.7,163.2 393.4,163.8 398.1,161.7 399.8,159.3 406.4,158.0 406.8,156.5 401.5,154.9 397.4,153.6 398.5,150.7 400.0,148.1M337.3,150.1 334.2,152.7 333.5,156.8 328.2,156.5 326.7,161.7 321.8,163.2 323.5,168.6 322.2,171.5M322.2,171.5 319.7,169.7 312.9,169.5 309.0,168.6 308.0,170.6 302.6,170.3 302.4,171.5M302.4,171.5 298.4,174.0 296.2,174.9 293.0,174.3 292.0,170.9 292.2,169.2 289.6,167.1 283.5,167.7 281.3,165.3 276.2,161.4 270.7,163.2 270.7,174.0M270.7,174.0 268.3,172.3 264.3,171.8 263.2,172.6M270.7,174.0 272.8,174.0 276.2,170.0 279.2,171.5 279.4,173.8 283.2,174.6 284.5,177.7 288.4,180.7 293.0,184.8M266.2,185.1 269.4,183.2 273.2,182.6 277.7,184.5 281.8,186.9 282.0,189.6M282.0,189.6 285.6,189.0 288.8,187.7 293.0,184.8M282.0,189.6 280.3,193.7 281.1,200.0 283.0,201.8 281.1,204.3M281.1,204.3 285.2,210.6 286.0,211.8 282.6,215.3M281.1,204.3 287.7,205.2 292.6,204.0 296.7,199.3 299.0,199.0 300.5,195.8 301.1,193.7 302.8,192.9 303.7,188.8 303.9,187.2 308.0,186.1 310.9,185.3M293.0,184.8 296.2,185.9 299.0,185.6 300.9,184.3 303.9,186.7 303.9,183.4 307.5,184.8 310.9,185.3M310.9,185.3 310.9,181.8 308.6,179.1 315.2,174.9 318.4,173.8 322.2,171.5M298.4,174.0 301.6,174.9 304.3,173.8 306.9,175.5 302.6,177.1 299.0,177.1 301.6,178.8 308.6,179.1M299.0,177.1 295.2,179.9 296.2,185.9M296.7,218.8 302.6,217.2 300.5,212.0 299.4,211.0 304.8,208.2 308.8,203.8 310.3,201.3 310.1,196.8 312.0,198.0 309.0,193.7 315.4,189.8 312.2,186.7M317.1,189.8 319.5,192.9 319.7,197.5 319.2,200.8 323.9,203.3M323.9,203.3 326.3,203.0 330.3,206.2 334.6,208.6 339.1,208.9M323.9,203.3 322.0,206.7 326.1,208.9 330.3,210.1 334.2,212.0 339.1,212.5 339.1,208.9M339.1,208.9 340.5,210.3 341.0,211.5 347.4,211.5 347.4,209.1 343.1,208.2 340.5,210.3M347.4,209.1 351.6,206.2 354.8,205.7 358.6,208.2M358.6,208.2 356.3,210.3 354.2,211.8 352.9,215.8 351.6,218.3 350.1,220.4 349.9,222.3 348.6,224.3M339.1,212.5 340.3,213.4 342.7,213.4 342.9,215.1 348.2,215.8 347.8,217.6 345.7,218.1 346.3,220.4 348.0,219.3 348.6,224.3M341.0,223.2 340.8,220.9 340.3,217.6 339.1,216.5 339.9,214.6 339.1,212.5M358.6,208.2 361.4,209.8 361.6,213.9 359.3,218.1 362.1,220.0 362.7,222.5 366.7,223.4M366.7,223.4 364.6,226.6 360.1,228.0 358.9,230.7 361.4,235.6 360.6,238.3 362.7,242.9 363.5,245.5 361.8,249.4M366.7,223.4 368.9,221.8 370.6,223.4 372.9,225.3 374.8,227.3 372.7,228.9 375.5,230.7 378.2,234.3 380.4,237.4 380.6,239.1M364.6,226.6 365.5,228.4 367.0,228.4 366.7,232.9 368.9,231.4 372.7,231.1 374.4,233.2 374.6,235.6 376.3,237.2 376.1,239.8 380.6,239.1M376.1,239.8 370.8,240.0 369.5,241.6 370.6,245.7M380.6,239.1 380.4,244.4 376.8,245.9 377.6,247.7 374.0,248.5M368.9,221.8 372.7,221.4 375.7,219.7 378.5,221.4 378.7,222.7 381.4,223.9M416.4,177.7 419.8,175.2 421.7,172.6 424.5,173.8 424.3,172.0 428.1,169.5 429.6,170.9M421.3,183.7 424.9,181.5M364.6,256.9 366.7,258.6 368.9,257.6M384.8,266.5 386.8,268.9 389.5,268.7 390.4,267.6 394.2,267.8 396.4,265.5 397.4,263.3 398.5,261.6 401.9,261.8M451.7,276.3 451.7,290.3M228.5,188.5 229.6,187.7 232.3,186.4 236.6,186.7 241.7,185.6 246.8,185.3 246.2,182.1 245.1,179.4 246.8,178.5M239.8,173.5 244.1,174.6 244.5,177.4 246.8,178.5M236.6,168.0 240.9,168.6 244.7,170.3 250.2,172.3 252.1,174.0 254.9,172.6M244.1,174.6 247.2,174.0 250.2,172.3M247.2,174.0 248.3,176.0 250.4,180.7M246.8,178.5 250.4,180.7 253.6,178.8 255.6,182.1M246.8,185.3 249.4,189.0 248.3,192.4 249.8,195.8 253.2,199.3 253.6,202.5 254.9,204.0M241.7,185.6 239.2,191.6 234.0,195.2M234.0,195.2 234.9,198.5 237.5,199.0 241.1,201.0 246.6,205.7 250.4,206.0 253.0,203.5M250.4,206.0 253.0,207.4 254.5,207.4M227.9,197.0 229.8,198.0 234.0,195.2M227.2,193.7 228.9,193.7 228.1,195.8 227.9,197.0M234.9,198.5 230.2,200.0 232.3,202.5 231.3,203.8 228.1,205.7 225.9,205.2M224.5,200.5 225.7,205.0M227.2,195.8 227.0,197.3 227.0,200.0 225.9,205.0M242.6,235.4 243.6,232.9 246.2,233.2 250.9,233.6 253.6,231.4 256.0,230.5 262.2,229.6M262.2,229.6 264.5,234.9M262.2,229.6 268.6,227.3 270.0,222.7 269.0,221.1M269.0,221.1 263.4,220.7 261.3,217.6M269.0,221.1 270.7,218.1 271.5,216.0M260.0,216.7 261.3,216.7M204.7,199.5 204.7,222.7M204.7,222.7 230.0,222.7M204.7,222.7 204.7,227.3 202.5,227.3 202.5,228.4 185.5,219.3 183.3,220.4 181.6,221.4 177.0,219.3 172.7,216.9 171.6,212.5 172.5,209.6 171.6,203.3 173.3,201.5 173.3,199.5 175.9,197.5 175.9,195.8M171.6,203.3 170.6,198.8 167.4,194.2 168.9,191.9 169.1,187.5 169.7,186.1M146.7,190.9 147.6,193.7 148.8,198.0 143.7,199.5 139.7,204.0 132.9,206.9 132.9,209.4M132.9,209.4 123.3,209.4M132.9,209.4 132.9,213.4 125.8,213.4 125.8,219.3 123.7,220.4 123.7,224.3 115.2,224.3M132.9,210.3 141.2,215.8 137.6,215.8 139.7,237.4 131.2,237.6 128.6,237.6 126.9,237.2 125.4,238.9M141.2,215.8 154.0,224.8 155.2,226.6 158.2,228.0 158.4,229.6 160.3,229.3M160.3,229.3 163.8,228.4 167.4,225.3 177.0,219.3M160.3,229.3 160.3,235.2 158.9,237.6 153.5,238.5 151.8,238.5M151.8,238.5 147.1,240.2 142.9,242.2 140.1,245.5 139.7,248.5M139.7,248.5 134.4,249.0 133.3,246.1 130.1,244.8 127.1,244.2 125.4,238.9M116.3,236.0 120.5,234.9 123.7,237.4 125.4,238.9M127.1,244.2 122.2,243.7 115.8,244.2M115.6,241.6 119.5,241.1 122.0,242.0 119.5,242.4 115.6,242.7M122.2,243.7 122.2,245.7 120.1,246.1 119.5,247.2M159.1,245.7 159.9,241.8 166.3,242.7 170.6,243.3 174.2,242.0 180.4,241.3M180.4,241.3 184.4,234.3 183.3,227.3 183.3,220.4M151.8,238.5 153.3,241.8 156.1,244.2 159.1,245.7M202.5,228.4 202.5,236.9 200.2,237.2 198.3,242.9 200.2,247.2M200.2,247.2 191.9,251.6 184.4,254.8M184.4,254.8 183.3,249.4 181.6,244.0 180.4,241.3M181.6,244.0 179.5,250.5 175.9,256.7 170.6,260.1 169.7,260.6M159.1,245.7 157.4,251.6 157.2,257.1M154.8,257.6 153.3,247.2M154.0,257.8 151.4,247.0M145.4,259.9 145.4,250.5 145.6,247.2M139.7,248.5 145.4,250.0M145.4,247.2 151.4,247.0 153.3,247.2 156.5,245.3 159.1,245.7M135.4,261.4 133.5,256.9 133.7,254.6 134.4,252.6 134.4,249.0M126.9,256.1 129.5,252.6 131.4,255.0 133.7,254.6M129.5,252.6 128.0,249.4 123.1,251.6M200.2,247.2 201.5,249.4 201.5,252.2 207.8,250.5 211.0,250.9 214.2,249.4 217.4,249.8 221.7,247.7 222.1,244.6 224.0,250.5M229.1,240.0 228.3,243.5 224.0,250.5 221.7,253.7 225.9,259.3 227.9,261.0M229.1,240.0 232.3,239.1 236.6,239.6 241.7,244.0M229.1,240.0 230.0,235.2 233.6,231.8M241.7,244.0 240.4,247.2 243.0,247.2 243.4,246.1M243.0,247.2 242.6,247.4 245.1,251.6 251.5,253.7 253.6,253.7 247.2,260.1 240.9,261.8 238.7,262.5M255.8,246.6 255.8,251.6 253.6,253.7M227.9,261.0 232.3,263.1 235.5,263.3 238.7,262.5M238.7,262.5 238.7,270.8 240.0,274.4M223.8,272.9 231.5,277.2 234.9,280.8M223.8,272.9 224.9,268.7 225.9,266.8 224.7,262.9 223.6,261.8 227.9,261.0M201.5,252.2 204.7,254.8 209.8,260.1M185.9,266.1 191.0,263.3 191.0,260.1 199.3,262.1 204.7,260.1 209.8,260.1M209.8,260.1 217.0,263.3 223.6,261.8M217.0,263.3 217.0,265.9 214.4,273.8 213.6,276.8 213.8,280.4M214.4,273.8 216.4,272.9 218.9,272.9M216.4,272.9 217.0,275.9 216.4,278.3 215.3,280.2 213.8,280.4M213.6,276.8 215.3,275.9 217.0,275.9M177.4,283.4 179.1,283.4 186.8,283.4 187.6,286.8 192.9,285.7 198.3,294.4 202.5,294.4 205.3,295.5 210.0,297.0 214.9,299.6 211.9,290.7 217.0,288.3M177.4,281.5 179.1,280.6 184.0,280.0 185.9,275.1 189.3,271.9 190.0,265.7 191.0,263.3M175.0,279.1 176.7,278.3 179.1,275.9 182.1,275.1 182.3,271.9 181.0,270.4 182.1,268.0 179.7,268.0 179.5,266.1M172.3,265.9 175.5,266.1 179.5,266.1 185.9,266.1M172.3,268.7 175.5,268.7 175.5,266.1M185.9,266.1 183.3,262.3 182.3,258.0 184.4,254.8M225.7,295.7 231.3,295.9 237.5,293.3M217.0,288.3 221.5,290.9 223.8,291.1M221.5,290.9 222.3,294.4 221.1,300.0 215.7,302.7 213.0,305.1M202.5,294.4 202.5,298.7 198.3,298.7 198.3,305.8M225.7,295.7 224.9,299.8 227.9,302.9 226.6,307.6M23.6,252.6 21.5,255.9 20.6,258.2 22.1,259.7M22.1,259.7 17.6,262.3 14.0,262.1 15.1,266.5 10.8,269.1 8.7,268.2M22.1,259.7 24.0,261.2 24.0,265.9 26.2,268.2 31.1,266.8M29.6,258.0 29.4,260.1 27.9,263.3 31.1,266.8M36.4,258.6 35.5,262.3 35.3,265.9M31.1,266.8 35.3,265.9 38.9,266.1 41.5,261.8M8.7,268.2 2.7,268.5 3.6,272.9 2.3,279.8 -4.1,285.7M8.7,268.2 7.6,263.3 7.0,257.6 2.3,255.9 -2.0,255.2 -3.0,251.6 -4.1,251.1M-4.1,291.1 1.0,291.1 1.0,294.4 4.4,294.4 5.1,297.6 4.4,300.3 4.6,303.1M4.4,294.4 9.8,292.0 12.3,291.8 12.1,295.9 19.3,299.8 22.5,300.5 23.2,305.8M-0.9,227.5 -1.3,230.0 -1.5,231.8" fill="none" stroke="#c6afc4" stroke-opacity=".6" stroke-width=".6" stroke-linejoin="round"/></svg><!--MAP-END--><!--MK-START--><svg class="abs" style="left:0;top:0" width="522" height="300" viewBox="0 0 522 300"><defs><radialGradient id="gy"><stop offset="0" stop-color="#ffff10" stop-opacity="0.97"/><stop offset=".8" stop-color="#ffff10" stop-opacity="0.97"/><stop offset="1" stop-color="#f4ee18" stop-opacity="0.85"/></radialGradient><radialGradient id="gr"><stop offset="0" stop-color="#fa3a30" stop-opacity="0.95"/><stop offset=".8" stop-color="#fa3a30" stop-opacity="0.95"/><stop offset="1" stop-color="#e93a30" stop-opacity="0.8"/></radialGradient><radialGradient id="go"><stop offset="0" stop-color="#f79a38" stop-opacity="0.95"/><stop offset=".8" stop-color="#f79a38" stop-opacity="0.95"/><stop offset="1" stop-color="#f08c2c" stop-opacity="0.8"/></radialGradient><radialGradient id="gg"><stop offset="0" stop-color="#2fd42f" stop-opacity="0.95"/><stop offset=".8" stop-color="#2fd42f" stop-opacity="0.95"/><stop offset="1" stop-color="#2cc62c" stop-opacity="0.8"/></radialGradient><radialGradient id="gn"><stop offset="0" stop-color="#9b9b9b" stop-opacity="0.85"/><stop offset=".8" stop-color="#9b9b9b" stop-opacity="0.85"/><stop offset="1" stop-color="#929292" stop-opacity="0.75"/></radialGradient><radialGradient id="gl"><stop offset="0" stop-color="#c4f400" stop-opacity="0.95"/><stop offset=".8" stop-color="#c4f400" stop-opacity="0.95"/><stop offset="1" stop-color="#b6e800" stop-opacity="0.8"/></radialGradient><radialGradient id="gc"><stop offset="0" stop-color="#e01a2a" stop-opacity="0.92"/><stop offset=".8" stop-color="#e01a2a" stop-opacity="0.92"/><stop offset="1" stop-color="#d41828" stop-opacity="0.8"/></radialGradient><radialGradient id="gb"><stop offset="0" stop-color="#a89466" stop-opacity="0.9"/><stop offset=".8" stop-color="#a89466" stop-opacity="0.9"/><stop offset="1" stop-color="#a08c60" stop-opacity="0.75"/></radialGradient></defs><circle cx="-4.5" cy="262.9" r="10.9" fill="url(#gy)"/><circle cx="4.8" cy="245.5" r="10.9" fill="url(#gn)"/><circle cx="121.7" cy="250.0" r="10.9" fill="url(#gn)"/><circle cx="135.0" cy="243.6" r="10.9" fill="url(#gn)"/><circle cx="142.8" cy="258.8" r="10.9" fill="url(#gy)"/><circle cx="150.6" cy="258.8" r="10.9" fill="url(#gy)"/><circle cx="159.4" cy="256.8" r="10.9" fill="url(#gy)"/><circle cx="167.8" cy="250.5" r="10.9" fill="url(#gy)"/><circle cx="172.5" cy="269.6" r="10.9" fill="url(#gy)"/><circle cx="185.0" cy="244.6" r="10.9" fill="url(#go)"/><circle cx="158.7" cy="186.0" r="10.9" fill="url(#gn)"/><circle cx="198.5" cy="171.0" r="10.9" fill="url(#go)"/><circle cx="192.8" cy="167.5" r="10.9" fill="url(#gc)"/><circle cx="188.4" cy="163.8" r="10.9" fill="url(#gc)"/><circle cx="268.7" cy="215.6" r="10.9" fill="url(#gy)"/><circle cx="254.5" cy="204.4" r="10.9" fill="url(#gy)"/><circle cx="251.1" cy="215.2" r="10.9" fill="url(#gy)"/><circle cx="235.9" cy="223.5" r="10.9" fill="url(#gy)"/><circle cx="262.4" cy="212.7" r="10.9" fill="url(#gb)"/><circle cx="228.4" cy="199.0" r="10.9" fill="url(#gn)"/><circle cx="247.0" cy="195.1" r="10.9" fill="url(#gr)"/><circle cx="221.3" cy="236.6" r="10.9" fill="url(#gy)"/><circle cx="234.8" cy="250.8" r="10.9" fill="url(#gl)"/><circle cx="222.0" cy="270.3" r="10.9" fill="url(#go)"/><circle cx="231.3" cy="273.5" r="10.9" fill="url(#gg)"/><circle cx="276.5" cy="182.6" r="10.9" fill="url(#gy)"/><circle cx="303.3" cy="142.4" r="10.9" fill="url(#gg)"/><circle cx="310.8" cy="199.6" r="10.9" fill="url(#gn)"/><circle cx="300.0" cy="173.6" r="10.9" fill="url(#gr)"/><circle cx="299.0" cy="181.5" r="10.9" fill="url(#gr)"/><circle cx="311.3" cy="168.7" r="10.9" fill="url(#gy)"/><circle cx="317.0" cy="168.5" r="10.9" fill="url(#gy)"/><circle cx="305.6" cy="193.3" r="10.9" fill="url(#gr)"/><circle cx="316.9" cy="206.9" r="10.9" fill="url(#gr)"/><circle cx="334.0" cy="208.4" r="10.9" fill="url(#gy)"/><circle cx="295.0" cy="215.9" r="10.9" fill="url(#gn)"/><circle cx="347.0" cy="218.2" r="10.9" fill="url(#gr)"/><circle cx="339.8" cy="220.6" r="10.9" fill="url(#gn)"/><circle cx="307.3" cy="228.8" r="10.9" fill="url(#gy)"/><circle cx="319.6" cy="232.8" r="10.9" fill="url(#gy)"/><circle cx="323.5" cy="242.8" r="10.9" fill="url(#gy)"/><circle cx="322.5" cy="255.6" r="10.9" fill="url(#gn)"/><circle cx="356.9" cy="233.5" r="10.9" fill="url(#gy)"/><circle cx="370.5" cy="231.3" r="10.9" fill="url(#gy)"/><circle cx="377.2" cy="224.7" r="10.9" fill="url(#gy)"/><circle cx="393.8" cy="219.8" r="10.9" fill="url(#gn)"/><circle cx="379.8" cy="247.6" r="10.9" fill="url(#gy)"/><circle cx="379.8" cy="283.5" r="10.9" fill="url(#gy)"/><circle cx="381.0" cy="154.5" r="10.9" fill="url(#gr)"/><circle cx="400.0" cy="177.5" r="10.9" fill="url(#gy)"/><circle cx="415.3" cy="172.5" r="10.9" fill="url(#gn)"/><circle cx="411.7" cy="200.8" r="10.9" fill="url(#gn)"/></svg><div id="labels"><i style="left:-10.2px;top:239.0px">N/A</i><i style="left:106.7px;top:243.5px">N/A</i><i style="left:120.0px;top:237.1px">N/A</i><i style="left:127.8px;top:252.3px">95</i><i style="left:135.6px;top:252.3px">88</i><i style="left:144.4px;top:250.3px">64</i><i style="left:152.8px;top:244.0px">93</i><i style="left:157.5px;top:263.1px">58</i><i style="left:170.0px;top:238.1px">129</i><i style="left:213.4px;top:192.5px">N/A</i><i style="left:143.7px;top:179.5px">N/A</i><i style="left:253.7px;top:209.1px">89</i><i style="left:183.5px;top:164.5px">138</i><i style="left:232.0px;top:188.6px">151</i><i style="left:177.8px;top:161.0px">178</i><i style="left:239.5px;top:197.9px">92</i><i style="left:173.4px;top:157.3px">200</i><i style="left:247.4px;top:206.2px">N/A</i><i style="left:236.1px;top:208.7px">91</i><i style="left:220.9px;top:217.0px">70</i><i style="left:206.3px;top:230.1px">52</i><i style="left:219.8px;top:244.3px">54</i><i style="left:207.0px;top:263.8px">119</i><i style="left:216.3px;top:267.0px">33</i><i style="left:261.5px;top:176.1px">66</i><i style="left:296.3px;top:162.2px">89</i><i style="left:302.0px;top:162.0px">99</i><i style="left:285.0px;top:167.1px">165</i><i style="left:284.0px;top:175.0px">160</i><i style="left:290.6px;top:186.8px">176</i><i style="left:295.8px;top:193.1px">N/A</i><i style="left:319.0px;top:201.9px">91</i><i style="left:301.9px;top:200.4px">169</i><i style="left:280.0px;top:209.4px">N/A</i><i style="left:332.0px;top:211.7px">159</i><i style="left:324.8px;top:214.1px">N/A</i><i style="left:292.3px;top:222.3px">65</i><i style="left:304.6px;top:226.3px">52</i><i style="left:308.5px;top:236.3px">64</i><i style="left:307.5px;top:249.1px">N/A</i><i style="left:341.9px;top:227.0px">52</i><i style="left:355.5px;top:224.8px">71</i><i style="left:362.2px;top:218.2px">61</i><i style="left:378.8px;top:213.3px">N/A</i><i style="left:364.8px;top:241.1px">53</i><i style="left:364.8px;top:277.0px">67</i><i style="left:366.0px;top:148.0px">164</i><i style="left:385.0px;top:171.0px">51</i><i style="left:400.3px;top:166.0px">N/A</i><i style="left:396.7px;top:194.3px">N/A</i></div><!--MK-END-->
<div id="pop"><div class="tipc"><div class="tip"></div></div><div class="pt"><span style="line-height:11.8px">Bishkek</span><span style="line-height:12.8px">2021-11-22 6:00 PM</span><span style="line-height:8.8px">(LT)</span></div>
<table><tr><th>Pollutant</th><th>AQI</th></tr><tr><td>PM2.5</td><td class="v">89</td></tr></table></div></div>

<div class="abs ph" style="top:6px">Select a City</div>
<div class="abs sel" style="top:34px">Bishkek<svg class="x" viewBox="0 0 6 7"><title>×</title><path d="M.4,.3L5.6,6.7M5.6,.3L.4,6.7" stroke="#8a8a8a" stroke-width="1" fill="none"/></svg><span class="c"></span></div>
<div class="abs ph" style="top:77px">Select a Parameter</div>
<div class="abs sel" style="top:105px">PM2.5<svg class="x" viewBox="0 0 6 7"><title>×</title><path d="M.4,.3L5.6,6.7M5.6,.3L.4,6.7" stroke="#8a8a8a" stroke-width="1" fill="none"/></svg><span class="c"></span></div>
<div id="city" class="abs"><b>Bishkek</b><div id="rss"><svg width="26" height="26" viewBox="0 0 26 26"><circle cx="5.4" cy="20.1" r="2.5" fill="#fff"/><path d="M2.8,12.1a10.3,10.3 0 0 1 10.3,10.3M2.8,4.4a18,18 0 0 1 18,18" stroke="#fff" stroke-width="3.8" fill="none"/></svg></div></div>
<div id="note" class="abs">Note: Values above 500 are considered Beyond the AQI. Follow<br>recommendations for the Hazardous category. Additional<br>information on reducing exposure to extremely high levels of particle<br>pollution is available <a>here</a>.</div>

<div id="tab1" class="abs tab">AQI</div>
<div id="tab2" class="abs tab">Concentration</div>
<div id="tab3" class="abs tab">Historical</div>
<div id="tabline" class="abs"></div>
<div id="learn" class="abs">Learn more about how the Air Quality Index [AQI] is calculated from the EPA <a>here</a>.</div>

<div id="chart" class="abs"><!--CH-START--><svg class="abs" style="left:0;top:0" width="595" height="296" viewBox="0 0 595 296" font-family="DejaVu Sans, Liberation Sans, sans-serif"><text x="44.6" y="184.2" text-anchor="end" font-size="7.9" fill="#222">0</text><path d="M56.3,155.7H591.3" stroke="#e6e6e6" stroke-width="1"/><text x="44.6" y="156.9" text-anchor="end" font-size="7.9" fill="#222">100</text><path d="M56.3,128.4H591.3" stroke="#e6e6e6" stroke-width="1"/><text x="44.6" y="129.6" text-anchor="end" font-size="7.9" fill="#222">200</text><path d="M56.3,101.1H591.3" stroke="#e6e6e6" stroke-width="1"/><text x="44.6" y="102.3" text-anchor="end" font-size="7.9" fill="#222">300</text><path d="M56.3,73.8H591.3" stroke="#e6e6e6" stroke-width="1"/><text x="44.6" y="75.0" text-anchor="end" font-size="7.9" fill="#222">400</text><path d="M56.3,46.5H591.3" stroke="#e6e6e6" stroke-width="1"/><text x="44.6" y="47.7" text-anchor="end" font-size="7.9" fill="#222">500</text><path d="M56.3,183.3H591.3" stroke="#ccd6eb" stroke-width="1"/><path d="M56.3,183.0v6.8M78.5,183.0v6.8M100.6,183.0v6.8M122.8,183.0v6.8M145.0,183.0v6.8M167.1,183.0v6.8M189.3,183.0v6.8M211.5,183.0v6.8M233.6,183.0v6.8M255.8,183.0v6.8M278.0,183.0v6.8M300.1,183.0v6.8M322.3,183.0v6.8M344.5,183.0v6.8M366.6,183.0v6.8M388.8,183.0v6.8M411.0,183.0v6.8M433.1,183.0v6.8M455.3,183.0v6.8M477.5,183.0v6.8M499.6,183.0v6.8M521.8,183.0v6.8M544.0,183.0v6.8M566.1,183.0v6.8M588.3,183.0v6.8" stroke="#ccd6eb" stroke-width="1" fill="none"/><rect x="61.48" y="173.99" width="11.8" height="9.01" fill="#0fdb15" stroke="#2a3a10" stroke-opacity=".75" stroke-width=".9"/><rect x="83.65" y="170.17" width="11.8" height="12.83" fill="#0fdb15" stroke="#2a3a10" stroke-opacity=".75" stroke-width=".9"/><rect x="105.82" y="171.26" width="11.8" height="11.74" fill="#0fdb15" stroke="#2a3a10" stroke-opacity=".75" stroke-width=".9"/><rect x="127.98" y="173.17" width="11.8" height="9.83" fill="#0fdb15" stroke="#2a3a10" stroke-opacity=".75" stroke-width=".9"/><rect x="150.15" y="171.26" width="11.8" height="11.74" fill="#0fdb15" stroke="#2a3a10" stroke-opacity=".75" stroke-width=".9"/><rect x="172.32" y="173.99" width="11.8" height="9.01" fill="#0fdb15" stroke="#2a3a10" stroke-opacity=".75" stroke-width=".9"/><rect x="194.48" y="172.63" width="11.8" height="10.37" fill="#0fdb15" stroke="#2a3a10" stroke-opacity=".75" stroke-width=".9"/><rect x="216.65" y="171.81" width="11.8" height="11.19" fill="#0fdb15" stroke="#2a3a10" stroke-opacity=".75" stroke-width=".9"/><rect x="238.82" y="165.80" width="11.8" height="17.20" fill="#ffff0a" stroke="#2a3a10" stroke-opacity=".75" stroke-width=".9"/><rect x="260.98" y="165.80" width="11.8" height="17.20" fill="#ffff0a" stroke="#2a3a10" stroke-opacity=".75" stroke-width=".9"/><rect x="283.15" y="168.26" width="11.8" height="14.74" fill="#ffff0a" stroke="#2a3a10" stroke-opacity=".75" stroke-width=".9"/><rect x="305.32" y="168.26" width="11.8" height="14.74" fill="#ffff0a" stroke="#2a3a10" stroke-opacity=".75" stroke-width=".9"/><rect x="327.48" y="173.44" width="11.8" height="9.56" fill="#0fdb15" stroke="#2a3a10" stroke-opacity=".75" stroke-width=".9"/><rect x="349.65" y="175.08" width="11.8" height="7.92" fill="#0fdb15" stroke="#2a3a10" stroke-opacity=".75" stroke-width=".9"/><rect x="371.82" y="177.27" width="11.8" height="5.73" fill="#0fdb15" stroke="#2a3a10" stroke-opacity=".75" stroke-width=".9"/><rect x="393.98" y="174.54" width="11.8" height="8.46" fill="#0fdb15" stroke="#2a3a10" stroke-opacity=".75" stroke-width=".9"/><rect x="416.15" y="172.08" width="11.8" height="10.92" fill="#0fdb15" stroke="#2a3a10" stroke-opacity=".75" stroke-width=".9"/><rect x="438.32" y="168.94" width="11.8" height="14.06" fill="#ffff0a" stroke="#2a3a10" stroke-opacity=".75" stroke-width=".9"/><rect x="460.48" y="168.26" width="11.8" height="14.74" fill="#ffff0a" stroke="#2a3a10" stroke-opacity=".75" stroke-width=".9"/><rect x="482.65" y="154.61" width="11.8" height="28.39" fill="#ff7e00" stroke="#2a3a10" stroke-opacity=".75" stroke-width=".9"/><rect x="504.82" y="152.42" width="11.8" height="30.58" fill="#ff7e00" stroke="#2a3a10" stroke-opacity=".75" stroke-width=".9"/><rect x="526.98" y="157.34" width="11.8" height="25.66" fill="#ffff0a" stroke="#2a3a10" stroke-opacity=".75" stroke-width=".9"/><rect x="549.15" y="157.34" width="11.8" height="25.66" fill="#ffff0a" stroke="#2a3a10" stroke-opacity=".75" stroke-width=".9"/><rect x="571.32" y="158.70" width="11.8" height="24.30" fill="#ffff0a" stroke="#2a3a10" stroke-opacity=".75" stroke-width=".9"/><text transform="translate(70.0,195.0) rotate(-45)" text-anchor="end" font-size="8.1" fill="#666">7 PM</text><text transform="translate(92.1,195.0) rotate(-45)" text-anchor="end" font-size="8.1" fill="#666">8 PM</text><text transform="translate(114.3,195.0) rotate(-45)" text-anchor="end" font-size="8.1" fill="#666">9 PM</text><text transform="translate(136.5,195.0) rotate(-45)" text-anchor="end" font-size="8.1" fill="#666">10 PM</text><text transform="translate(158.7,195.0) rotate(-45)" text-anchor="end" font-size="8.1" fill="#666">11 PM</text><text transform="translate(180.8,195.0) rotate(-45)" text-anchor="end" font-size="8.1" fill="#666">Nov 22, 2021 12 AM</text><text transform="translate(203.0,195.0) rotate(-45)" text-anchor="end" font-size="8.1" fill="#666">1 AM</text><text transform="translate(225.2,195.0) rotate(-45)" text-anchor="end" font-size="8.1" fill="#666">2 AM</text><text transform="translate(247.3,195.0) rotate(-45)" text-anchor="end" font-size="8.1" fill="#666">3 AM</text><text transform="translate(269.5,195.0) rotate(-45)" text-anchor="end" font-size="8.1" fill="#666">4 AM</text><text transform="translate(291.7,195.0) rotate(-45)" text-anchor="end" font-size="8.1" fill="#666">5 AM</text><text transform="translate(313.8,195.0) rotate(-45)" text-anchor="end" font-size="8.1" fill="#666">6 AM</text><text transform="translate(336.0,195.0) rotate(-45)" text-anchor="end" font-size="8.1" fill="#666">7 AM</text><text transform="translate(358.2,195.0) rotate(-45)" text-anchor="end" font-size="8.1" fill="#666">8 AM</text><text transform="translate(380.3,195.0) rotate(-45)" text-anchor="end" font-size="8.1" fill="#666">9 AM</text><text transform="translate(402.5,195.0) rotate(-45)" text-anchor="end" font-size="8.1" fill="#666">10 AM</text><text transform="translate(424.7,195.0) rotate(-45)" text-anchor="end" font-size="8.1" fill="#666">11 AM</text><text transform="translate(446.8,195.0) rotate(-45)" text-anchor="end" font-size="8.1" fill="#666">12 PM</text><text transform="translate(469.0,195.0) rotate(-45)" text-anchor="end" font-size="8.1" fill="#666">1 PM</text><text transform="translate(491.2,195.0) rotate(-45)" text-anchor="end" font-size="8.1" fill="#666">2 PM</text><text transform="translate(513.3,195.0) rotate(-45)" text-anchor="end" font-size="8.1" fill="#666">3 PM</text><text transform="translate(535.5,195.0) rotate(-45)" text-anchor="end" font-size="8.1" fill="#666">4 PM</text><text transform="translate(557.6,195.0) rotate(-45)" text-anchor="end" font-size="8.1" fill="#666">5 PM</text><text transform="translate(579.8,195.0) rotate(-45)" text-anchor="end" font-size="8.1" fill="#666">6 PM</text><text x="297.9" y="17.2" text-anchor="middle" font-size="12.9" fill="#333" letter-spacing=".22">Bishkek – PM2.5</text><text transform="translate(22.2,112.0) rotate(-90)" text-anchor="middle" font-size="8" fill="#222">AQI</text><rect x="280.7" y="271.7" width="12" height="8.4" fill="#cccccc"/><text x="296.8" y="279.7" font-size="8.8" font-weight="bold" fill="#2a2a3a" font-family="Liberation Sans, Arial, sans-serif">AQI</text></svg><!--CH-END--></div>

<div id="cc" class="abs">
<div class="h">Current Conditions<small>observed at</small><span>Nov 22, 2021 6:00 PM (LT)</span></div>
<div class="y">89 AQI<br>Moderate<br>PM2.5</div>
<div class="hm">Health Message</div>
<div class="tx">The AQI is between 51 and 100. Air quality<br>is acceptable; however, pollution in this<br>range may pose a moderate health concern<br>for a very small number of individuals.<br>People who are unusually sensitive to ozone<br>or particle pollution may experience<br>respiratory symptoms.</div>
</div>
<div id="note2" class="abs">Note: Values above 500 are considered Beyond</div>
</body>
</html>
